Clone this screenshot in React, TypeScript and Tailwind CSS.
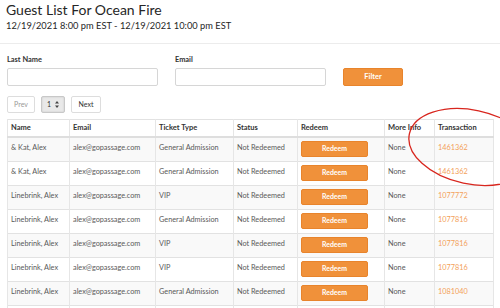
import React from "react";

type Guest = {
  name: string;
  email: string;
  ticket: string;
  status: string;
  info: string;
  txn: string;
};

const guests: Guest[] = [
  { name: "& Kat, Alex", email: "alex@gopassage.com", ticket: "General Admission", status: "Not Redeemed", info: "None", txn: "1461362" },
  { name: "& Kat, Alex", email: "alex@gopassage.com", ticket: "General Admission", status: "Not Redeemed", info: "None", txn: "1461362" },
  { name: "Linebrink, Alex", email: "alex@gopassage.com", ticket: "VIP", status: "Not Redeemed", info: "None", txn: "1077772" },
  { name: "Linebrink, Alex", email: "alex@gopassage.com", ticket: "General Admission", status: "Not Redeemed", info: "None", txn: "1077816" },
  { name: "Linebrink, Alex", email: "alex@gopassage.com", ticket: "VIP", status: "Not Redeemed", info: "None", txn: "1077816" },
  { name: "Linebrink, Alex", email: "alex@gopassage.com", ticket: "VIP", status: "Not Redeemed", info: "None", txn: "1077816" },
  { name: "Linebrink, Alex", email: "alex@gopassage.com", ticket: "General Admission", status: "Not Redeemed", info: "None", txn: "1081040" },
];

const cols = ["Name", "Email", "Ticket Type", "Status", "Redeem", "More Info", "Transaction"];
const widths = [62, 86, 78, 64, 87, 50, 59];

const cell = "align-top pt-[5px] px-[3px] border-x border-[#e6e6e6] whitespace-nowrap";

export default function App() {
  return (
    <div className="relative w-[500px] h-[308px] overflow-hidden bg-white text-[#333] font-['Lato','Liberation_Sans',sans-serif]">
      <div className="px-[6px] pt-[1px] pb-[11px] border-b border-[#ececec]">
        <h1 className="text-[14px] leading-[17px] font-normal text-[#262626]">Guest List For Ocean Fire</h1>
        <p className="text-[9.3px] leading-[12px] mt-[2px] text-[#262626]">12/19/2021 8:00 pm EST - 12/19/2021 10:00 pm EST</p>
      </div>

      <div className="flex items-end gap-[17px] px-[7px] pt-[11px]">
        <label className="flex flex-col w-[151px]">
          <span className="text-[7.4px] font-bold leading-[10px] mb-[3px]">Last Name</span>
          <input className="h-[18px] border border-[#d6d6d6] rounded-[2px] outline-none" />
        </label>
        <label className="flex flex-col w-[151px]">
          <span className="text-[7.4px] font-bold leading-[10px] mb-[3px]">Email</span>
          <input className="h-[18px] border border-[#d6d6d6] rounded-[2px] outline-none" />
        </label>
        <button className="h-[18px] w-[60px] bg-[#f0913a] border border-[#e8842c] rounded-[2px] text-white text-[7.4px] font-bold">
          Filter
        </button>
      </div>

      <div className="flex items-center gap-[6px] px-[7px] mt-[10px]">
        <button className="h-[17px] w-[28px] border border-[#ddd] rounded-[2px] text-[7px] text-[#999]">Prev</button>
        <div className="flex items-center justify-between h-[17px] w-[24px] px-[5px] border border-[#c8c8c8] rounded-[2px] bg-[#e9e9e9] shadow-[inset_0_0_2px_rgba(0,0,0,0.15)] text-[7px]">
          <span>1</span>
          <svg width="4" height="7" viewBox="0 0 4 7">
            <path d="M2 0 L4 2.6 L0 2.6 Z M2 7 L4 4.4 L0 4.4 Z" fill="#444" />
          </svg>
        </div>
        <button className="h-[17px] w-[30px] border border-[#ddd] rounded-[2px] text-[7px]">Next</button>
      </div>

      <div className="px-[7px] mt-[6px]">
        <table className="table-fixed border-collapse w-[486px] border border-[#e2e2e2]">
          <colgroup>
            {widths.map((w, i) => (
              <col key={i} style={{ width: w }} />
            ))}
          </colgroup>
          <thead>
            <tr className="h-[17px] border-b-2 border-[#dedede]">
              {cols.map((c) => (
                <th key={c} className="text-left font-bold text-[7.5px] px-[3px] border-x border-[#e6e6e6] text-[#333]">
                  {c}
                </th>
              ))}
            </tr>
          </thead>
          <tbody className="text-[7.3px] text-[#5a5a5a]">
            {guests.map((g, i) => (
              <tr key={i} className={`h-[24px] border-b border-[#e2e2e2] ${i % 2 === 0 ? "bg-[#f9f9f9]" : "bg-white"}`}>
                <td className={cell}>{g.name}</td>
                <td className={cell}>{g.email}</td>
                <td className={cell}>{g.ticket}</td>
                <td className={cell}>{g.status}</td>
                <td className="align-top pt-[3px] px-[3px] pb-[4px] border-x border-[#e6e6e6]">
                  <button className="h-[16px] w-[67px] bg-[#f0913a] border border-[#e8842c] rounded-[2px] text-white text-[6.9px] font-bold">
                    Redeem
                  </button>
                </td>
                <td className={cell}>{g.info}</td>
                <td className={`${cell} text-[#f3a15a]`}>{g.txn}</td>
              </tr>
            ))}
            <tr className="h-[24px] bg-white">
              {cols.map((c) => (
                <td key={c} className="border-x border-[#e6e6e6]" />
              ))}
            </tr>
          </tbody>
        </table>
      </div>

      <svg className="absolute left-0 top-0 pointer-events-none" width="500" height="308" viewBox="0 0 500 308">
        <ellipse cx="471" cy="147" rx="63" ry="37" transform="rotate(12 471 147)" fill="none" stroke="#d8261e" strokeWidth="1.3" />
      </svg>
    </div>
  );
}
